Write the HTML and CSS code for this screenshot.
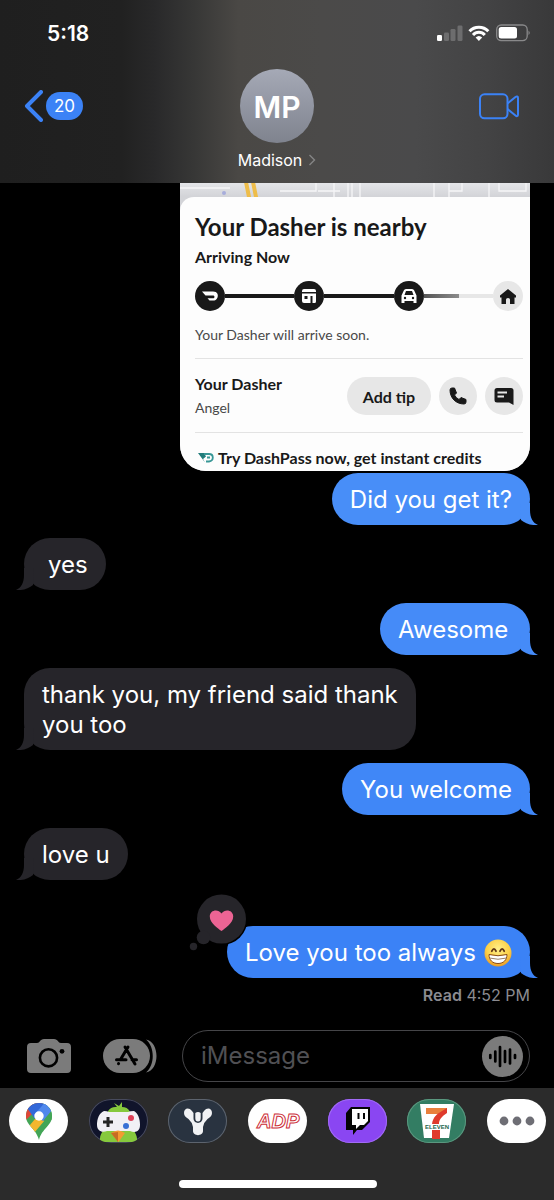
FILE: index.html
```html
<!DOCTYPE html>
<html lang="en">
<head>
<meta charset="utf-8">
<meta name="viewport" content="width=device-width, initial-scale=1">
<title>Madison</title>
<link rel="stylesheet" href="styles.css">
</head>
<body>
<svg class="defs" width="0" height="0" aria-hidden="true">
  <symbol id="tail" viewBox="0 0 18 22"><path d="M10 0V7C10 15 13 20 18 22C11 22.600 5 20.500 1 17L0 0Z" fill="currentColor"/></symbol>
</svg>

<header class="header">
  <div class="status">
    <time class="clock">5:18</time>
    <svg class="status-icons" width="92" height="20" viewBox="0 0 92 20" aria-label="Signal, Wi-Fi, battery">
      <rect x="0" y="11" width="5" height="6" rx="1.300" fill="#fff"/>
      <g fill="#6d6d6e"><rect x="7" y="8.500" width="5" height="8.500" rx="1.300"/><rect x="13.500" y="5" width="5" height="12" rx="1.300"/><rect x="20.500" y="1.500" width="5" height="15.500" rx="1.300"/></g>
      <g fill="none" stroke="#fff" stroke-width="3"><path d="M32.500 7.200a13 13 0 0 1 18.800 0"/><path d="M36 10.900a8 8 0 0 1 11.800 0"/></g>
      <path d="M38.600 13.600a4.800 4.800 0 0 1 6.600 0L41.900 17Z" fill="#fff"/>
      <rect x="59.700" y="1" width="30.500" height="15.600" rx="4.500" fill="none" stroke="#89898a" stroke-width="1.300"/>
      <rect x="61.700" y="3" width="18.300" height="11.600" rx="2.500" fill="#fff"/>
      <path d="M91.500 6.500q2.500 2.300 0 4.600" fill="#89898a"/>
    </svg>
  </div>
  <nav class="nav">
    <button class="back" aria-label="Back, 20 unread">
      <svg width="19" height="32" viewBox="0 0 19 32"><path d="M17 2L3 16L17 30" fill="none" stroke="#3b82f6" stroke-width="4" stroke-linecap="round" stroke-linejoin="round"/></svg>
      <span class="count">20</span>
    </button>
    <div class="avatar">MP</div>
    <button class="video" aria-label="Video call">
      <svg width="40" height="27" viewBox="0 0 40 27" fill="none" stroke="#3b82f6" stroke-width="2" stroke-linejoin="round"><rect x="1" y="1.300" width="27.500" height="24" rx="4.500"/><path d="M28.500 10.500L36.500 4C37.700 3 39 3.200 39 5V21.600C39 23.400 37.700 23.600 36.500 22.600L28.500 16"/></svg>
    </button>
    <button class="contact">Madison
      <svg width="8" height="12" viewBox="0 0 8 12"><path d="M1.500 1L6.500 6L1.500 11" fill="none" stroke="#858585" stroke-width="1.400"/></svg>
    </button>
  </nav>
</header>

<main class="thread">
  <article class="card">
    <svg class="map" viewBox="0 0 350 30" preserveAspectRatio="xMinYMin slice" aria-hidden="true">
      <defs><linearGradient id="mg" x2="0" y2="1"><stop stop-color="#e4e5e8"/><stop offset=".45" stop-color="#d3d4d8"/></linearGradient></defs>
      <rect width="350" height="30" fill="url(#mg)"/>
      <path d="M66 -1L71 24M73 -1L78 24" stroke="#eebd4a" stroke-width="4"/>
      <circle cx="44" cy="10" r="2" fill="#a7addb"/>
      <path d="M0 5H50M100 8H136V-1M138 8H160M154 0V14M168 0V14M172 0V14M180 0V14M254 0V14M269 0V14M269 8H282V0M309 0V14M319 0V8H346V0" fill="none" stroke="#f6f6f8" stroke-width="1.300"/>
    </svg>
    <div class="sheet">
      <h1 class="card-title">Your Dasher is nearby</h1>
      <h2 class="card-sub">Arriving Now</h2>
      <div class="steps">
        <span class="step"><svg viewBox="0 0 30 30"><path d="M7 10.500H18C22.500 10.500 23.500 14 22.500 16.500C21.500 19 20 19.500 18 19.500H14.500L12.500 17.300H18C20 17.300 20 14.500 18 14.500H10.500Z" fill="#fff"/></svg></span>
        <span class="leg"></span>
        <span class="step"><svg viewBox="0 0 30 30"><path d="M8 11V10Q8 8 10 8H20Q22 8 22 10V11ZM8 12.500H22V20.500Q22 22 20.500 22H18.500V15H16.500V22H10Q8 22 8 20Z" fill="#fff"/><path d="M10.500 15H13.500V18H10.500Z" fill="#191919"/></svg></span>
        <span class="leg"></span>
        <span class="step"><svg viewBox="0 0 30 30"><path d="M9.800 9.500Q10.300 8 12 8H18Q19.700 8 20.200 9.500L22.500 14.500V22H19.500V20H10.500V22H7.500V14.500ZM12 10L10.500 14H19.500L18 10Z" fill="#fff" fill-rule="evenodd"/><circle cx="11" cy="17" r="1.200" fill="#191919"/><circle cx="19" cy="17" r="1.200" fill="#191919"/></svg></span>
        <span class="leg leg-live"></span>
        <span class="step step-next"><svg viewBox="0 0 30 30"><path d="M15 8L23 14.500V16.500H21.500V23H17V18.500Q17 17 15 17T13 18.500V23H8.500V16.500H7V14.500Z" fill="#191919"/></svg></span>
      </div>
      <p class="note">Your Dasher will arrive soon.</p>
      <div class="driver">
        <div class="who"><strong>Your Dasher</strong><span>Angel</span></div>
        <button class="tip">Add tip</button>
        <button class="round" aria-label="Call"><svg width="20" height="20" viewBox="0 0 20 20"><path d="M2 4Q2 2 4 2H6.500L8.500 7L6.500 9Q8 12 11 13.500L13 11.500L18 13.500V16Q18 18 16 18C8 18 2 12 2 4Z" fill="#191919" stroke="#191919" stroke-linejoin="round"/></svg></button>
        <button class="round" aria-label="Message"><svg width="22" height="20" viewBox="0 0 22 20"><path d="M4 2H18Q20.500 2 20.500 4.500V19L16 16.500H4Q1.500 16.500 1.500 14V4.500Q1.500 2 4 2Z" fill="#191919"/><path d="M4.500 6.500H14M4.500 10.500H11" stroke="#e7e7e7" stroke-width="1.800"/></svg></button>
      </div>
      <p class="promo"><svg width="16" height="10" viewBox="0 0 16 10"><path d="M0 0H6L8 3.500L5 6L7 9.500Z" fill="#227c7b"/><path d="M6 1H11Q14.800 1 14.800 4.500T11 8.500H8M9 4.500H12" fill="none" stroke="#389796" stroke-width="1.800"/></svg>Try DashPass now, get instant credits</p>
    </div>
  </article>

  <p class="bubble sent sent-top">Did you get it?<svg class="tail"><use href="#tail"/></svg></p>
  <p class="bubble received short">yes<svg class="tail"><use href="#tail"/></svg></p>
  <p class="bubble sent sent-mid">Awesome<svg class="tail"><use href="#tail"/></svg></p>
  <p class="bubble received">thank you, my friend said thank<br>you too<svg class="tail"><use href="#tail"/></svg></p>
  <p class="bubble sent sent-low">You welcome<svg class="tail"><use href="#tail"/></svg></p>
  <p class="bubble received">love u<svg class="tail"><use href="#tail"/></svg></p>
  <p class="bubble sent reacted">Love you too always
    <svg class="emoji" width="28" height="28" viewBox="0 0 28 28" role="img" aria-label="grinning face">
      <defs><radialGradient id="face" cx=".5" cy=".35" r=".65"><stop stop-color="#fff08a"/><stop offset=".65" stop-color="#fcd048"/><stop offset="1" stop-color="#e99a27"/></radialGradient></defs>
      <circle cx="14" cy="14" r="13.500" fill="url(#face)"/>
      <path d="M7.800 12.200Q10 7.500 12 12.200M16 12.200Q18.200 7.500 20.200 12.200" fill="none" stroke="#613615" stroke-width="1.800" stroke-linecap="round"/>
      <path d="M5 15.500Q14 18 23 15.500C23 21 19.500 24.500 14 24.500S5 21 5 15.500Z" fill="#fff" stroke="#8a4a16"/>
      <path d="M5.500 19Q14 21.500 22.500 19" fill="none" stroke="#9a8066"/>
    </svg>
    <svg class="reaction" width="64" height="64" viewBox="0 0 64 64" role="img" aria-label="Loved">
      <circle cx="35.500" cy="29" r="26" fill="#000"/><g fill="#26252a"><circle cx="35.500" cy="29" r="24.500"/><circle cx="17.500" cy="47.500" r="6.800"/><circle cx="7.500" cy="56.500" r="3.700"/></g>
      <path d="M35.500 41C32 38.500 23.800 33 23.800 26.500C23.800 20 32 18.500 35.500 23.500C39 18.500 47.200 20 47.200 26.500C47.200 33 39 38.500 35.500 41Z" fill="#ec6494"/>
    </svg>
    <svg class="tail"><use href="#tail"/></svg>
  </p>
  <p class="receipt"><b>Read</b> 4:52 PM</p>
</main>

<form class="compose">
  <button class="tool" type="button" aria-label="Camera"><svg width="44" height="36" viewBox="0 0 44 36"><path d="M4 5H10C13 5 13 1 17 1H27C31 1 31 5 34 5H40Q44 5 44 9V31Q44 35 40 35H4Q0 35 0 31V9Q0 5 4 5Z" fill="#7b7b7b"/><circle cx="21.500" cy="19.800" r="8.600" fill="none" stroke="#000" stroke-width="2.600"/><circle cx="35" cy="13.300" r="2.400" fill="#000"/></svg></button>
  <button class="tool" type="button" aria-label="Apps"><svg width="54" height="36" viewBox="0 0 54 36"><path d="M43 1.500C57 4 57 32 43 34.500C52 27 52 9 43 1.500Z" fill="#7b7b7b"/><rect x="0" y="1" width="47" height="34" rx="17" fill="#7b7b7b"/><g stroke="#000" stroke-width="3" stroke-linecap="round"><path d="M13.500 21.700H23M29 21.700H33.500M22 9L32 26M25 9L17.500 21.500M15.600 25.500L15.500 25.700"/></g></svg></button>
  <div class="field">
    <input type="text" placeholder="iMessage" aria-label="iMessage">
    <button class="audio" type="button" aria-label="Record audio"><svg width="41" height="41" viewBox="0 0 41 41"><circle cx="20.500" cy="20.500" r="20.500" fill="#7b7b7b"/><path d="M8.300 19V22M13.300 15.500V25.500M18 11V30M23 15V26M28 13.500V27.500M33 19V22" stroke="#000" stroke-width="2.700" stroke-linecap="round"/></svg></button>
  </div>
</form>

<footer class="dock">
  <div class="apps">
    <button class="app white" aria-label="Maps"><svg viewBox="0 0 59 44">
      <defs><clipPath id="pin"><path d="M30 4C22 4 17 10 17 17C17 27 27 29 30 41C33 29 43 27 43 17C43 10 38 4 30 4Z"/></clipPath></defs>
      <g clip-path="url(#pin)"><path d="M0 0H59V44H0Z" fill="#43a556"/><path d="M10 28L43 -5L10 -5Z" fill="#df4637"/><path d="M16 32L26 20L36 21L20 40Z" fill="#f3b72e"/><path d="M18 9L26 20L42 4L35 -4Z" fill="#3268d9"/><path d="M30 17L43 5L50 20L35 22Z" fill="#43a556"/><path d="M25 16L39 0L43 11L34 22Z" fill="#5088ec"/></g><circle cx="30" cy="17" r="4.700" fill="#fff"/></svg></button>
    <button class="app navy" aria-label="GamePigeon"><svg viewBox="0 0 59 44">
      <path d="M11 43C10 34 15 32 18 24C16 12 21 7 28 8L25 4L30 7L33 3V8C40 8 44 14 42 25C44 32 49 35 48 43Z" fill="#86c93d"/>
      <path d="M15 12Q18 12 20 13H39Q41 12 45 12C49 14 51 20 51 26C51 33 46 34 41 32H18C13 34 8 32 8 26C8 20 10 14 15 12Z" fill="#f1f0f5"/>
      <path d="M14 23H24M19 18V28" stroke="#252525" stroke-width="3"/><circle cx="42" cy="19" r="3" fill="#dd4058"/><circle cx="37" cy="27" r="3" fill="#3870d5"/>
      <path d="M22 34Q29 29 36 34L29.500 43Z" fill="#f29b31"/><path d="M22 34L29 33V43Z" fill="#c76c23"/></svg></button>
    <button class="app slate" aria-label="Destiny"><svg viewBox="0 0 59 44" fill="#f1f2f4"><path d="M16 14C16 9 21 8 24 12L25.500 14V19C25.500 25.500 34.500 25.500 34.500 19V14L36 12C39 8 44 9 44 14C44 17 42 18 39.500 20Q36 23 35 28V32C35 37.500 25 37.500 25 32V28Q24 23 20.500 20C18 18 16 17 16 14Z"/><path d="M27.300 14Q30 12 32.700 14V19Q32.700 22.500 30 22.500T27.300 19Z"/></svg></button>
    <button class="app white" aria-label="ADP"><svg viewBox="0 0 59 44"><text class="adp" x="9" y="29">ADP</text></svg></button>
    <button class="app purple" aria-label="Twitch"><svg viewBox="0 0 59 44"><path d="M18 14L23 8H42V23L34 31H29L25 36V31H18Z" fill="#050505"/><path d="M24 10H40V22L36 26H32L28 30V26H24Z" fill="#fff"/><path d="M30.500 14V20M36 14V20" stroke="#050505" stroke-width="2"/></svg></button>
    <button class="app green" aria-label="7-Eleven"><svg viewBox="0 0 59 44"><path d="M13 5H47L42 39H17Z" fill="#fff"/><path d="M19 9H40V13L34 17L32 15H19Z" fill="#e9803c"/><path d="M40 9V14C34 18 32 21 32 25H25C26 18 30 15 35 12Z" fill="#df3a2c"/><path d="M25 31H33V40H25Z" fill="#df3a2c"/><text class="eleven" x="30" y="30">ELEVEN</text></svg></button>
    <button class="app white" aria-label="More"><svg viewBox="0 0 59 44" fill="#6e6e75"><circle cx="17" cy="22" r="4.400"/><circle cx="30" cy="22" r="4.400"/><circle cx="43" cy="22" r="4.400"/></svg></button>
  </div>
  <div class="home"></div>
</footer>
</body>
</html>
```
FILE: styles.css
```css
* { box-sizing: border-box; }

body {
  margin: 0;
  min-height: 100vh;
  display: flex;
  flex-direction: column;
  background: #000;
  color: #fff;
  font-family: Inter, "Liberation Sans", sans-serif;
}

h1, h2, p { margin: 0; }
svg { display: block; flex: none; }
button {
  padding: 0;
  border: 0;
  background: none;
  color: inherit;
  font: inherit;
  cursor: pointer;
}
.defs { position: absolute; }

/* Header */
.header {
  padding-bottom: 13px;
  background: linear-gradient(90deg, #1f1f1f 0%, #212121 22%, #29292a 28%, #373736 35%, #4a4845 43%, #4b4a49 58%, #4a4a4b 75%, #434344 88%, #39393a 100%);
}
.status {
  height: 69px;
  padding: 0 25px 2px 47px;
  display: flex;
  align-items: center;
  justify-content: space-between;
}
.clock { font-size: 21px; font-weight: 600; line-height: 24px; }
.status-icons { overflow: visible; }
.nav {
  display: grid;
  grid-template-columns: 1fr auto 1fr;
  align-items: center;
  row-gap: 7px;
}
.back {
  display: flex;
  align-items: center;
  gap: 3px;
  padding-left: 24px;
  justify-self: start;
}
.count {
  width: 37px;
  height: 28px;
  border-radius: 14px;
  background: #3b82f6;
  font-size: 17px;
  line-height: 28px;
  text-align: center;
}
.avatar {
  width: 74px;
  height: 74px;
  border-radius: 50%;
  background: linear-gradient(#a5a9b6, #7f838e);
  font-size: 30px;
  font-weight: 600;
  line-height: 76px;
  text-align: center;
}
.video { justify-self: end; padding-right: 35px; }
.contact {
  grid-column: 1 / -1;
  justify-self: center;
  display: flex;
  align-items: center;
  gap: 6px;
  font-size: 16px;
  line-height: 20px;
}

/* Thread */
.thread {
  flex: 1;
  display: flex;
  flex-direction: column;
  gap: 13px;
  padding: 0 24px;
}
.card {
  width: 350px;
  max-width: 100%;
  align-self: flex-end;
  display: grid;
  grid-template-rows: 14px auto;
  margin-bottom: -11px;
  border-radius: 0 0 26px 26px;
  background: #d5d6da;
  color: #191919;
  font-family: Lato, "Open Sans", sans-serif;
  overflow: hidden;
}
.map { width: 100%; height: 30px; grid-area: 1 / 1; }
.sheet {
  grid-area: 2 / 1;
  position: relative;
  padding: 16px 7px 3px 15px;
  border-radius: 14px 0 0 0;
  background: #fdfdfd;
}
.card-title { font-size: 24px; font-weight: 700; line-height: 28px; }
.card-sub { margin-top: 6px; font-size: 16px; font-weight: 700; line-height: 20px; }
.steps { display: flex; align-items: center; margin-top: 14px; }
.step { width: 30px; height: 30px; border-radius: 50%; background: #191919; }
.step-next { background: #e7e7e7; }
.leg { flex: 1; height: 4px; background: #191919; }
.leg-live { background: linear-gradient(90deg, #555 0%, #8b8b8b 50%, #e7e7e7 50%); }
.note { margin: 14px 0 13px; color: #494949; font-size: 14px; line-height: 20px; }
.driver {
  display: flex;
  align-items: center;
  gap: 8px;
  padding: 15px 0 14px;
  border-top: 1px solid #e3e3e3;
  border-bottom: 1px solid #e3e3e3;
}
.who { flex: 1; display: flex; flex-direction: column; gap: 4px; font-size: 14px; line-height: 20px; }
.who strong { font-size: 16px; font-weight: 700; }
.who span { color: #494949; }
.tip {
  width: 84px;
  height: 38px;
  border-radius: 19px;
  background: #e7e7e7;
  font-size: 16px;
  font-weight: 700;
}
.round {
  width: 38px;
  height: 38px;
  display: grid;
  place-items: center;
  border-radius: 50%;
  background: #e7e7e7;
}
.promo {
  display: flex;
  align-items: center;
  gap: 4px;
  margin-top: 15px;
  padding-left: 3px;
  font-size: 16px;
  font-weight: 700;
  line-height: 20px;
}

.bubble {
  position: relative;
  padding: 12px 18px 10px;
  border-radius: 26px;
  font-size: 24px;
  line-height: 30px;
}
.sent { align-self: flex-end; background: #3b82f6; color: #fff; }
.received { align-self: flex-start; background: #26252a; color: #fff; }
.short { padding-left: 24px; }
.sent-top { background: #488ef8; }
.sent-mid { min-width: 150px; background: #458bf8; }
.sent-low { background: #4087f7; }
.tail {
  position: absolute;
  right: -8px;
  bottom: 0;
  width: 18px;
  height: 22px;
  color: #3b82f6;
}
.sent-top .tail { color: #488ef8; }
.sent-mid .tail { color: #458bf8; }
.sent-low .tail { color: #4087f7; }
.received .tail { right: auto; left: -8px; color: #26252a; transform: scaleX(-1); }
.reacted { display: flex; align-items: center; gap: 8px; margin-top: 33px; }
.reaction { position: absolute; left: -41px; top: -36px; }
.receipt { margin-top: -6px; color: #8b8b90; font-size: 16px; line-height: 20px; text-align: right; }
.receipt b { font-weight: 600; }

/* Composer */
.compose {
  display: flex;
  align-items: center;
  gap: 25px;
  padding: 0 24px 6px 27px;
}
.tool + .tool { margin-left: 7px; }
.field {
  flex: 1;
  min-width: 0;
  height: 52px;
  display: flex;
  align-items: center;
  padding: 0 6px 0 18px;
  border: 1px solid #454548;
  border-radius: 26px;
}
.field input {
  flex: 1;
  min-width: 0;
  padding: 0;
  border: 0;
  outline: 0;
  background: transparent;
  color: #fff;
  font: 24px/30px Inter, "Liberation Sans", sans-serif;
}
.field input::placeholder { color: #505054; opacity: 1; }

/* App drawer */
.dock { padding: 11px 8px 12px 9px; background: #2b2b2b; }
.apps { display: flex; justify-content: space-between; }
.app { width: 59px; height: 44px; border-radius: 22px; overflow: hidden; }
.app svg { width: 100%; height: 100%; }
.white { background: #fff; }
.navy { background: #10142b; box-shadow: inset 0 0 0 1px #484b5d; }
.slate { background: #293340; box-shadow: inset 0 0 0 1px #5d646e; }
.purple { background: #8a46f2; box-shadow: inset 0 0 0 1px #a16bf4; }
.green { background: #337d63; box-shadow: inset 0 0 0 1px #5b977f; }
.adp {
  fill: #fff;
  stroke: #cc2e38;
  stroke-width: 1px;
  font: italic bold 20px "Liberation Sans", sans-serif;
}
.eleven {
  fill: #25664b;
  font: bold 6px "Liberation Sans", sans-serif;
  text-anchor: middle;
}
.home {
  width: 198px;
  height: 8px;
  margin: 37px auto 0;
  border-radius: 4px;
  background: #fff;
}
```
